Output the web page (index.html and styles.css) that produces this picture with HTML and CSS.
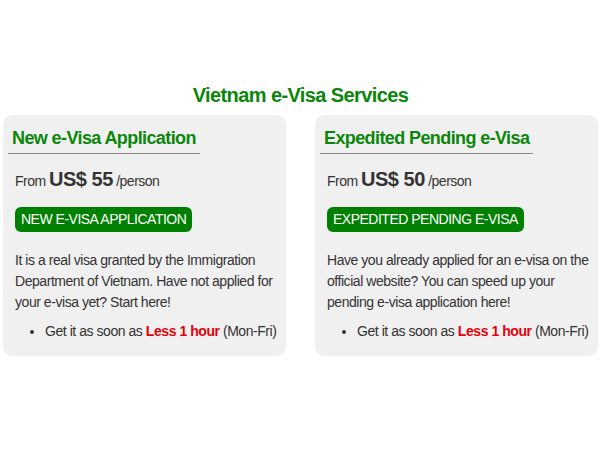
FILE: index.html
```html
<!DOCTYPE html>
<html>
<head>
<meta charset="utf-8">
<link rel="stylesheet" href="styles.css">
</head>
<body>
<div class="page">
  <h1 class="title">Vietnam e-Visa Services</h1>
  <div class="cards">
    <div class="card">
      <h2 class="card-title">New e-Visa Application</h2>
      <div class="price">From <strong>US$ 55</strong> /person</div>
      <a class="btn" href="#">New e-Visa Application</a>
      <p class="desc">It is a real visa granted by the Immigration Department of Vietnam. Have not applied for your e-visa yet? Start here!</p>
      <ul class="list">
        <li>Get it as soon as <span class="hl">Less 1 hour</span> (Mon-Fri)</li>
      </ul>
    </div>
    <div class="card">
      <h2 class="card-title">Expedited Pending e-Visa</h2>
      <div class="price">From <strong>US$ 50</strong> /person</div>
      <a class="btn" href="#">Expedited Pending e-Visa</a>
      <p class="desc">Have you already applied for an e-visa on the official website? You can speed up your pending e-visa application here!</p>
      <ul class="list">
        <li>Get it as soon as <span class="hl">Less 1 hour</span> (Mon-Fri)</li>
      </ul>
    </div>
  </div>
</div>
</body>
</html>
```
FILE: styles.css
```css
body {
  margin: 0;
  background: #fff;
  font-family: "Liberation Sans", Arial, sans-serif;
  color: #333;
}
.page {
  padding: 83px 2px 0 3px;
}
.title {
  margin: 0 0 8px;
  font-size: 20px;
  line-height: 24px;
  font-weight: bold;
  letter-spacing: -0.6px;
  color: #0a870a;
  text-align: center;
}
.cards {
  display: grid;
  grid-template-columns: 1fr 1fr;
  gap: 29px;
}
.card {
  background: #f1f0f1;
  border-radius: 9px;
  padding: 12px 7px 14px 12px;
}
.card-title {
  display: inline-block;
  margin: 0 0 0 -7px;
  padding: 0 4px 4px;
  font-size: 18px;
  line-height: 22px;
  font-weight: bold;
  letter-spacing: -0.6px;
  color: #0a870a;
  border-bottom: 1px solid #8a8a8a;
}
.price {
  margin-top: 14px;
  font-size: 14px;
  line-height: 22px;
  letter-spacing: -0.5px;
}
.price strong {
  font-size: 20px;
}
.btn {
  display: inline-block;
  margin-top: 15px;
  padding: 0 6px;
  height: 25px;
  line-height: 25px;
  background: #008000;
  color: #fff;
  font-size: 14px;
  letter-spacing: -0.5px;
  text-transform: uppercase;
  text-decoration: none;
  border-radius: 6px;
}
.desc {
  margin: 18px 0 0;
  font-size: 14px;
  line-height: 21px;
  letter-spacing: -0.45px;
}
.list {
  margin: 8px 0 0;
  padding-left: 30px;
  font-size: 14px;
  line-height: 21px;
  letter-spacing: -0.45px;
}
.list li {
  white-space: nowrap;
}
.hl {
  color: #e8000b;
  font-weight: bold;
}
```
